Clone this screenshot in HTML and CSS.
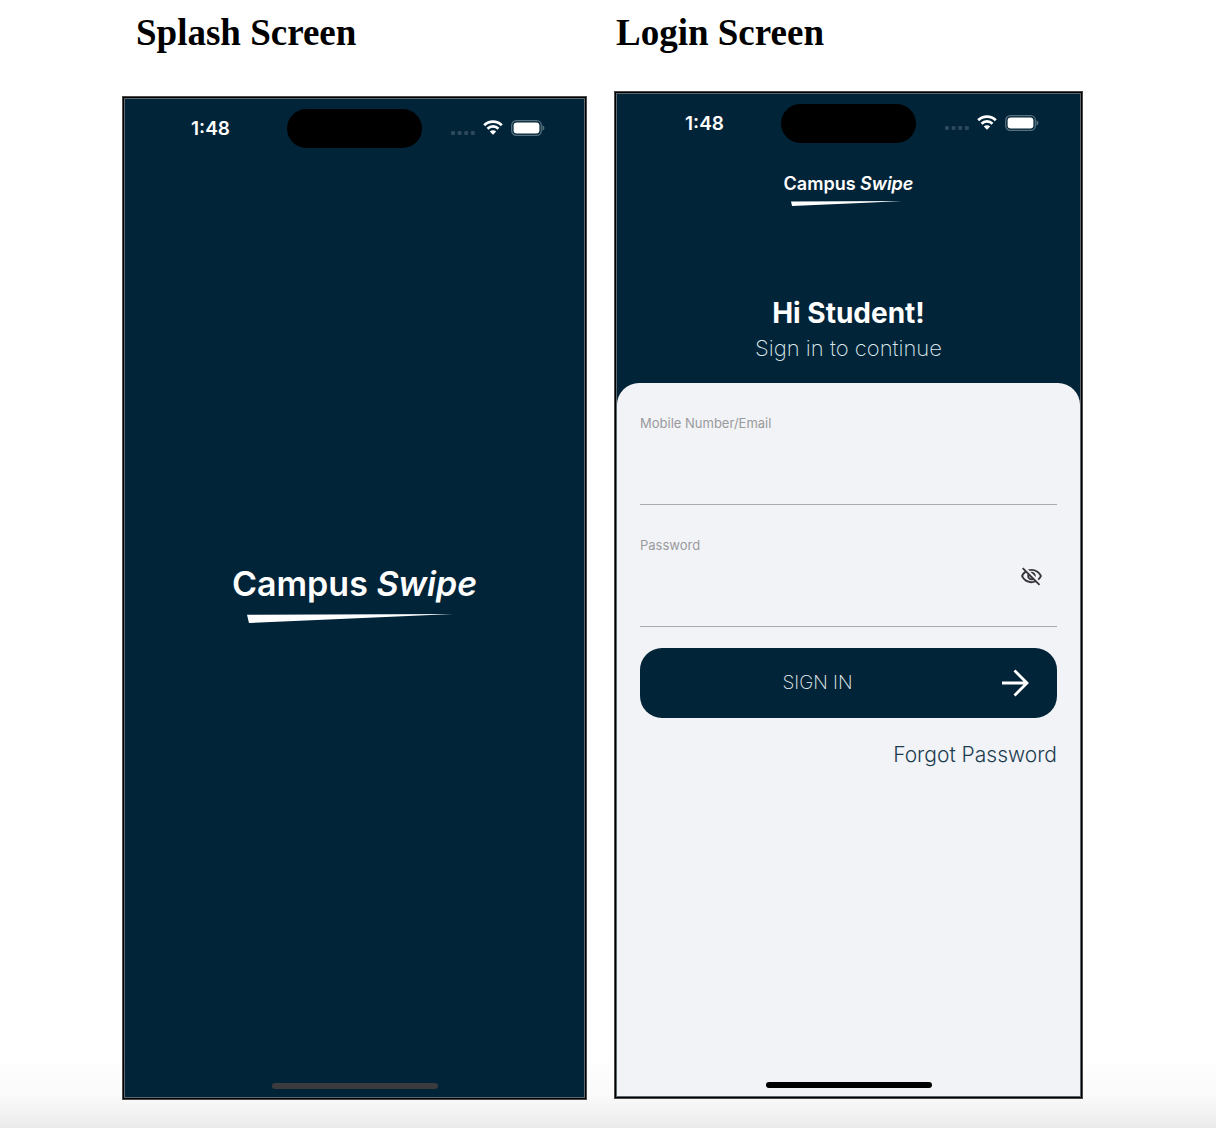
FILE: index.html
```html
<!DOCTYPE html>
<html lang="en">
<head>
<meta charset="utf-8">
<meta name="viewport" content="width=device-width, initial-scale=1">
<title>Campus Swipe</title>
<link rel="stylesheet" href="styles.css">
</head>
<body>
<svg class="sprite" aria-hidden="true">
  <symbol id="dots" viewBox="0 0 24 4">
    <rect width="4" height="4" rx="1.2"/><rect x="6.6" width="4" height="4" rx="1.2"/><rect x="13.2" width="4" height="4" rx="1.2"/><rect x="19.8" width="4" height="4" rx="1.2"/>
  </symbol>
  <symbol id="wifi" viewBox="0 0 20 15">
    <path d="M1.2 5.2A12.6 12.6 0 0 1 18.8 5.2M4.5 8.7A7.9 7.9 0 0 1 15.5 8.7" fill="none" stroke="#fff" stroke-width="2.7"/>
    <path d="M10 14.8 6.8 11.6a4.6 4.6 0 0 1 6.4 0Z" fill="#fff"/>
  </symbol>
  <symbol id="battery" viewBox="0 0 34 16">
    <rect x=".7" y=".7" width="29.6" height="14.6" rx="4.6" fill="none" stroke="#57707e" stroke-width="1.3"/>
    <rect x="2.6" y="2.6" width="25.8" height="10.8" rx="3" fill="#fff"/>
    <path d="M31.5 5.3q2 .8 2 2.7t-2 2.7z" fill="#57707e"/>
  </symbol>
  <symbol id="swoosh" viewBox="0 0 206 9" preserveAspectRatio="none">
    <path d="M0 .8 206 0 150 2.6 2 9Z" fill="#fff"/>
  </symbol>
</svg>
<main class="screens">
  <section class="screen">
    <h2 class="screen-title screen-title-inset">Splash Screen</h2>
    <div class="phone phone-splash">
      <div class="status">
        <span class="time">1:48</span>
        <span class="island"></span>
        <span class="signals">
          <svg class="dots"><use href="#dots"/></svg>
          <svg class="wifi"><use href="#wifi"/></svg>
          <svg class="battery"><use href="#battery"/></svg>
        </span>
      </div>
      <div class="splash">
        <div class="logo logo-large">
          <span class="logo-name">Campus <em>Swipe</em></span>
          <svg class="swoosh"><use href="#swoosh"/></svg>
        </div>
      </div>
      <div class="home home-dim"></div>
    </div>
  </section>
  <section class="screen">
    <h2 class="screen-title">Login Screen</h2>
    <div class="phone phone-login">
      <div class="status">
        <span class="time">1:48</span>
        <span class="island"></span>
        <span class="signals">
          <svg class="dots"><use href="#dots"/></svg>
          <svg class="wifi"><use href="#wifi"/></svg>
          <svg class="battery"><use href="#battery"/></svg>
        </span>
      </div>
      <header class="welcome">
        <div class="logo">
          <span class="logo-name">Campus <em>Swipe</em></span>
          <svg class="swoosh"><use href="#swoosh"/></svg>
        </div>
        <h1 class="greeting">Hi Student!</h1>
        <p class="hint">Sign in to continue</p>
      </header>
      <form class="sheet">
        <div class="field">
          <label for="user">Mobile Number/Email</label>
          <div class="control"><input id="user" type="text"></div>
        </div>
        <div class="field">
          <label for="password">Password</label>
          <div class="control">
            <input id="password" type="password">
            <button class="reveal" type="button" aria-label="Show password">
              <svg viewBox="1 2 22 20"><path d="M12 6c3.79 0 7.17 2.13 8.82 5.5-.59 1.22-1.42 2.27-2.41 3.12l1.41 1.41c1.39-1.23 2.49-2.77 3.18-4.53C21.27 7.11 17 4 12 4c-1.27 0-2.49.2-3.64.57l1.65 1.65C10.66 6.09 11.32 6 12 6zm-1.07 1.14L13 9.21c.57.25 1.03.71 1.28 1.28l2.07 2.07c.08-.34.14-.7.14-1.07C16.5 9.01 14.48 7 12 7c-.37 0-.72.05-1.07.14zM2.01 3.87l2.68 2.68C3.06 7.83 1.77 9.53 1 11.5 2.73 15.89 7 19 12 19c1.52 0 2.98-.29 4.32-.82l3.42 3.42 1.41-1.41L3.42 2.45 2.01 3.87zm7.5 7.5l2.61 2.61c-.04.01-.08.02-.12.02-1.38 0-2.5-1.12-2.5-2.5 0-.05.01-.08.01-.13zm-3.4-3.4l1.75 1.75c-.23.55-.36 1.15-.36 1.78 0 2.48 2.02 4.5 4.5 4.5.63 0 1.23-.13 1.77-.36l.98.98c-.88.24-1.8.38-2.75.38-3.79 0-7.17-2.13-8.82-5.5.7-1.43 1.72-2.61 2.93-3.53z"/></svg>
            </button>
          </div>
        </div>
        <button class="submit" type="submit">
          <span>SIGN IN</span>
          <svg viewBox="0 0 27 28"><path d="M0 14H25M12.5 1.5 25 14 12.5 26.500" fill="none" stroke="#fff" stroke-width="2.8"/></svg>
        </button>
        <a class="forgot" href="#forgot">Forgot Password</a>
        <div class="home"></div>
      </form>
    </div>
  </section>
</main>
</body>
</html>
```
FILE: styles.css
```css
* { box-sizing: border-box; }

body {
  margin: 0;
  min-height: 100vh;
  font-family: Inter, "Liberation Sans", sans-serif;
  background: linear-gradient(to top, #ebebeb, #fafafa 32px, #fff 72px);
}

.sprite { position: absolute; width: 0; height: 0; }

.screens {
  display: grid;
  grid-template-columns: 465fr 469fr;
  gap: 27px;
  padding: 12px 133px 28px 122px;
}

.screen { display: flex; flex-direction: column; }

.screen-title {
  margin: 0;
  padding-left: 2px;
  font: bold 37px/42px "Liberation Serif", serif;
  color: #000;
}
.screen-title-inset { padding-left: 14px; }

.phone {
  display: flex;
  flex-direction: column;
  margin: 39px 2px 0;
  border: 1px solid #5d686e;
  box-shadow: 0 0 0 1px #000, 0 0 0 2px #4a4a4a;
  background: #022438;
  color: #fff;
}
.phone-splash { margin-top: 44px; aspect-ratio: 461 / 1000; }
.phone-login { aspect-ratio: 465 / 1004; }

.status {
  display: grid;
  grid-template-columns: 1fr 135px 1fr;
  align-items: center;
  padding-top: 10px;
}
.time {
  justify-self: end;
  padding-right: 57px;
  font-size: 19px;
  line-height: 24px;
  font-weight: 600;
}
.island { height: 39px; border-radius: 20px; background: #000; }
.signals { display: flex; align-items: center; padding: 0 0 2px 29px; }
.dots { width: 24px; height: 4px; margin: 10px 8px 0 0; fill: #2c485a; }
.wifi { width: 20px; height: 15px; margin-right: 8px; }
.battery { width: 34px; height: 16px; }

.splash {
  flex: 1;
  display: flex;
  align-items: center;
  justify-content: center;
  padding-bottom: 47px;
}

.logo { display: flex; flex-direction: column; align-items: center; }
.logo-name { font-size: 18px; line-height: 24px; font-weight: 600; }
.swoosh { width: 111px; height: 5px; margin: 5px 4px 0 0; }
.logo-large .logo-name { font-size: 34px; line-height: 44px; }
.logo-large .swoosh { width: 206px; height: 9px; margin: 8px 8px 0 0; }

.home {
  width: 166px;
  height: 6px;
  margin: auto auto 8px;
  border-radius: 3px;
  background: #000;
}
.home-dim { margin-top: 0; background: #3b3a3d; }

.welcome { padding: 29px 0 21px; text-align: center; }
.greeting { margin: 90px 0 0; font-size: 28px; line-height: 34px; font-weight: 700; }
.hint {
  margin: 4px 0 0;
  font-size: 22px;
  line-height: 28px;
  font-weight: 200;
  color: #dbe8ee;
}

.sheet {
  flex: 1;
  display: flex;
  flex-direction: column;
  padding: 31px 23px 0;
  border-radius: 22px 22px 0 0;
  background: #f2f3f6;
}
.field {
  display: flex;
  flex-direction: column;
  height: 91px;
  margin-bottom: 31px;
  border-bottom: 1px solid #a9abae;
}
.field + .field { margin-bottom: 21px; }
.field label { font-size: 13px; line-height: 18px; color: #999a9d; }
.control { flex: 1; display: flex; align-items: flex-start; }
.control input {
  flex: 1;
  min-width: 0;
  height: 100%;
  padding: 0;
  border: 0;
  outline: 0;
  background: none;
  font: 18px Inter, sans-serif;
  color: #022438;
}
.reveal {
  display: flex;
  margin: 13px 15px 0 0;
  padding: 0;
  border: 0;
  background: none;
  fill: #38373e;
}
.reveal svg { width: 21px; height: 19px; }

.submit {
  display: flex;
  align-items: center;
  gap: 7px;
  height: 70px;
  padding: 0 28px 0 0;
  border: 0;
  border-radius: 22px;
  background: #022438;
  color: #e9f1f4;
  font: 200 19px/28px Inter, sans-serif;
}
.submit span { flex: 1; }
.submit svg { width: 27px; height: 28px; }

.forgot {
  align-self: flex-end;
  margin-top: 23px;
  font-size: 21px;
  line-height: 28px;
  font-weight: 300;
  color: #1c3d50;
  text-decoration: none;
}
```
